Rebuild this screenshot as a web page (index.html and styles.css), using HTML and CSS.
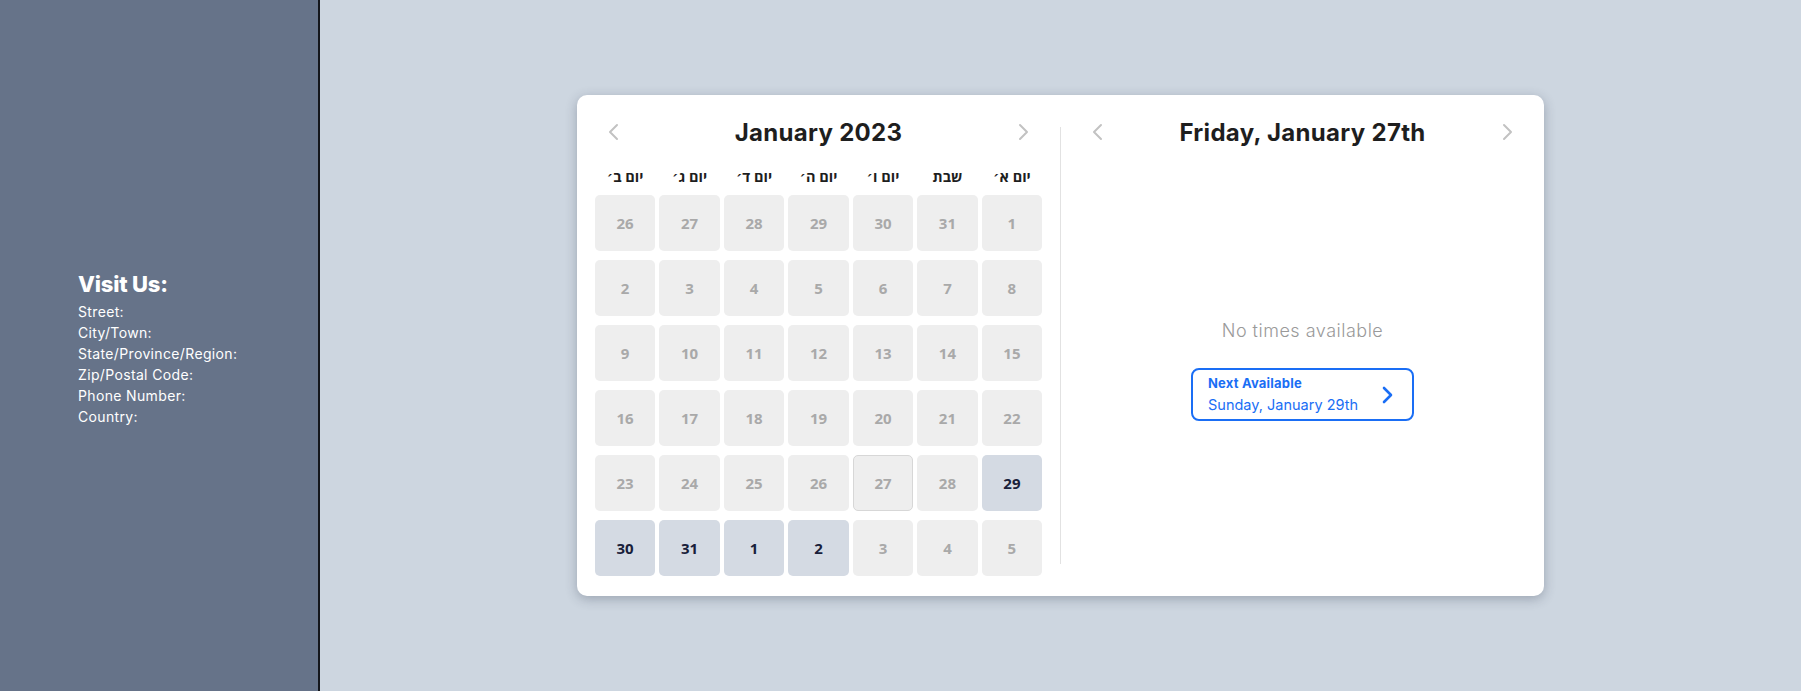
FILE: index.html
```html
<!DOCTYPE html>
<html lang="en">
<head>
<meta charset="utf-8">
<title>Booking</title>
<link rel="stylesheet" href="styles.css">
</head>
<body>
<div class="page">
  <aside class="sidebar">
    <div class="visit">
      <h2 class="visit-title">Visit Us:</h2>
      <div class="visit-line">Street:</div>
      <div class="visit-line">City/Town:</div>
      <div class="visit-line">State/Province/Region:</div>
      <div class="visit-line">Zip/Postal Code:</div>
      <div class="visit-line">Phone Number:</div>
      <div class="visit-line">Country:</div>
    </div>
  </aside>
  <main class="main">
    <section class="card">
      <div class="month">
        <div class="head">
          <span class="chev"><svg width="14" height="18" viewBox="0 0 14 18"><path d="M10 2 L3 9 L10 16" fill="none" stroke="#c2c2c2" stroke-width="2" stroke-linecap="round" stroke-linejoin="round"/></svg></span>
          <h1 class="title">January 2023</h1>
          <span class="chev"><svg width="14" height="18" viewBox="0 0 14 18"><path d="M4 2 L11 9 L4 16" fill="none" stroke="#c2c2c2" stroke-width="2" stroke-linecap="round" stroke-linejoin="round"/></svg></span>
        </div>
        <div class="weekdays">
          <span>יום ב׳</span><span>יום ג׳</span><span>יום ד׳</span><span>יום ה׳</span><span>יום ו׳</span><span>שבת</span><span>יום א׳</span>
        </div>
        <div class="grid">
          <div class="day">26</div><div class="day">27</div><div class="day">28</div><div class="day">29</div><div class="day">30</div><div class="day">31</div><div class="day">1</div>
          <div class="day">2</div><div class="day">3</div><div class="day">4</div><div class="day">5</div><div class="day">6</div><div class="day">7</div><div class="day">8</div>
          <div class="day">9</div><div class="day">10</div><div class="day">11</div><div class="day">12</div><div class="day">13</div><div class="day">14</div><div class="day">15</div>
          <div class="day">16</div><div class="day">17</div><div class="day">18</div><div class="day">19</div><div class="day">20</div><div class="day">21</div><div class="day">22</div>
          <div class="day">23</div><div class="day">24</div><div class="day">25</div><div class="day">26</div><div class="day selected">27</div><div class="day">28</div><div class="day avail">29</div>
          <div class="day avail">30</div><div class="day avail">31</div><div class="day avail">1</div><div class="day avail">2</div><div class="day">3</div><div class="day">4</div><div class="day">5</div>
        </div>
      </div>
      <div class="divider"></div>
      <div class="times">
        <div class="head head-right">
          <span class="chev"><svg width="14" height="18" viewBox="0 0 14 18"><path d="M10 2 L3 9 L10 16" fill="none" stroke="#c2c2c2" stroke-width="2" stroke-linecap="round" stroke-linejoin="round"/></svg></span>
          <h1 class="title">Friday, January 27th</h1>
          <span class="chev"><svg width="14" height="18" viewBox="0 0 14 18"><path d="M4 2 L11 9 L4 16" fill="none" stroke="#c2c2c2" stroke-width="2" stroke-linecap="round" stroke-linejoin="round"/></svg></span>
        </div>
        <div class="times-body">
          <p class="empty">No times available</p>
          <button class="next">
            <span class="next-text">
              <span class="next-label">Next Available</span>
              <span class="next-date">Sunday, January 29th</span>
            </span>
            <svg class="next-chev" width="12" height="18" viewBox="0 0 12 18"><path d="M3 2 L10 9 L3 16" fill="none" stroke="#1a6ef5" stroke-width="2.6" stroke-linecap="round" stroke-linejoin="round"/></svg>
          </button>
        </div>
      </div>
    </section>
  </main>
</div>
</body>
</html>
```

FILE: styles.css
```css
* { box-sizing: border-box; }
html, body { margin: 0; padding: 0; }
body {
  font-family: Inter, "Open Sans", "DejaVu Sans", sans-serif;
  background: #cdd6e0;
}
.page {
  display: flex;
  height: 691px;
}
.sidebar {
  width: 320px;
  background: #667389;
  border-right: 2px solid #14161b;
  display: flex;
  align-items: center;
  padding-left: 78px;
  color: #ffffff;
}
.visit { margin-top: 6px; }
.visit-title {
  margin: 0 0 4px;
  font-size: 22px;
  font-weight: 800;
  letter-spacing: -0.2px;
  line-height: 26px;
}
.visit-line {
  font-size: 14px;
  line-height: 21px;
  letter-spacing: 0.35px;
}
.main {
  flex: 1;
  display: flex;
  align-items: center;
  justify-content: center;
}
.card {
  width: 967px;
  height: 501px;
  background: #ffffff;
  border-radius: 10px;
  box-shadow: 0 3px 12px rgba(40, 50, 70, 0.3);
  display: flex;
  padding: 17px 0 20px;
}
.month {
  width: 483px;
  padding: 0 18px;
}
.divider {
  width: 1px;
  background: #e2e2e2;
  margin: 15px 0 12px;
}
.times {
  width: 483px;
  display: flex;
  flex-direction: column;
}
.head {
  height: 40px;
  display: flex;
  align-items: center;
  justify-content: space-between;
  padding: 0 12px;
}
.head-right { padding: 0 30px; }
.chev { width: 14px; height: 18px; display: flex; }
.title {
  margin: 0;
  font-size: 24px;
  font-weight: 700;
  color: #1e1e1e;
  letter-spacing: 0.3px;
}
.weekdays {
  display: grid;
  grid-template-columns: repeat(7, 1fr);
  column-gap: 4.3px;
  margin: 14px 0 9px;
  height: 20px;
  align-items: center;
  text-align: center;
  font-family: "Open Sans", "DejaVu Sans", sans-serif;
  font-weight: 700;
  font-size: 14.5px;
  color: #1e1e1e;
}
.grid {
  display: grid;
  grid-template-columns: repeat(7, 1fr);
  grid-auto-rows: 56px;
  column-gap: 4.3px;
  row-gap: 9px;
}
.day {
  background: #eeeeee;
  border-radius: 5px;
  display: flex;
  align-items: center;
  justify-content: center;
  font-family: "Open Sans", "DejaVu Sans", sans-serif;
  font-weight: 700;
  font-size: 15px;
  color: #a9a9a9;
}
.day.selected { border: 1px solid #d7d7d7; }
.day.avail { background: #d4dae3; color: #18203a; }
.times-body {
  display: flex;
  flex-direction: column;
  align-items: center;
  padding-top: 167px;
}
.empty {
  margin: 0;
  font-size: 18px;
  font-weight: 300;
  line-height: 24px;
  letter-spacing: 0.5px;
  color: #9a9a9a;
}
.next {
  margin-top: 25px;
  width: 223px;
  height: 53px;
  border: 2px solid #1a6ef5;
  border-radius: 8px;
  background: #ffffff;
  display: flex;
  align-items: center;
  justify-content: space-between;
  padding: 1px 19px 0 15px;
  font-family: inherit;
  cursor: pointer;
}
.next-text {
  display: flex;
  flex-direction: column;
  align-items: flex-start;
  color: #1a6ef5;
}
.next-label {
  font-size: 13px;
  font-weight: 700;
  line-height: 16px;
  letter-spacing: 0.2px;
}
.next-date {
  font-size: 14.5px;
  line-height: 20px;
  margin-top: 4px;
}
.next-chev { display: block; }
```
